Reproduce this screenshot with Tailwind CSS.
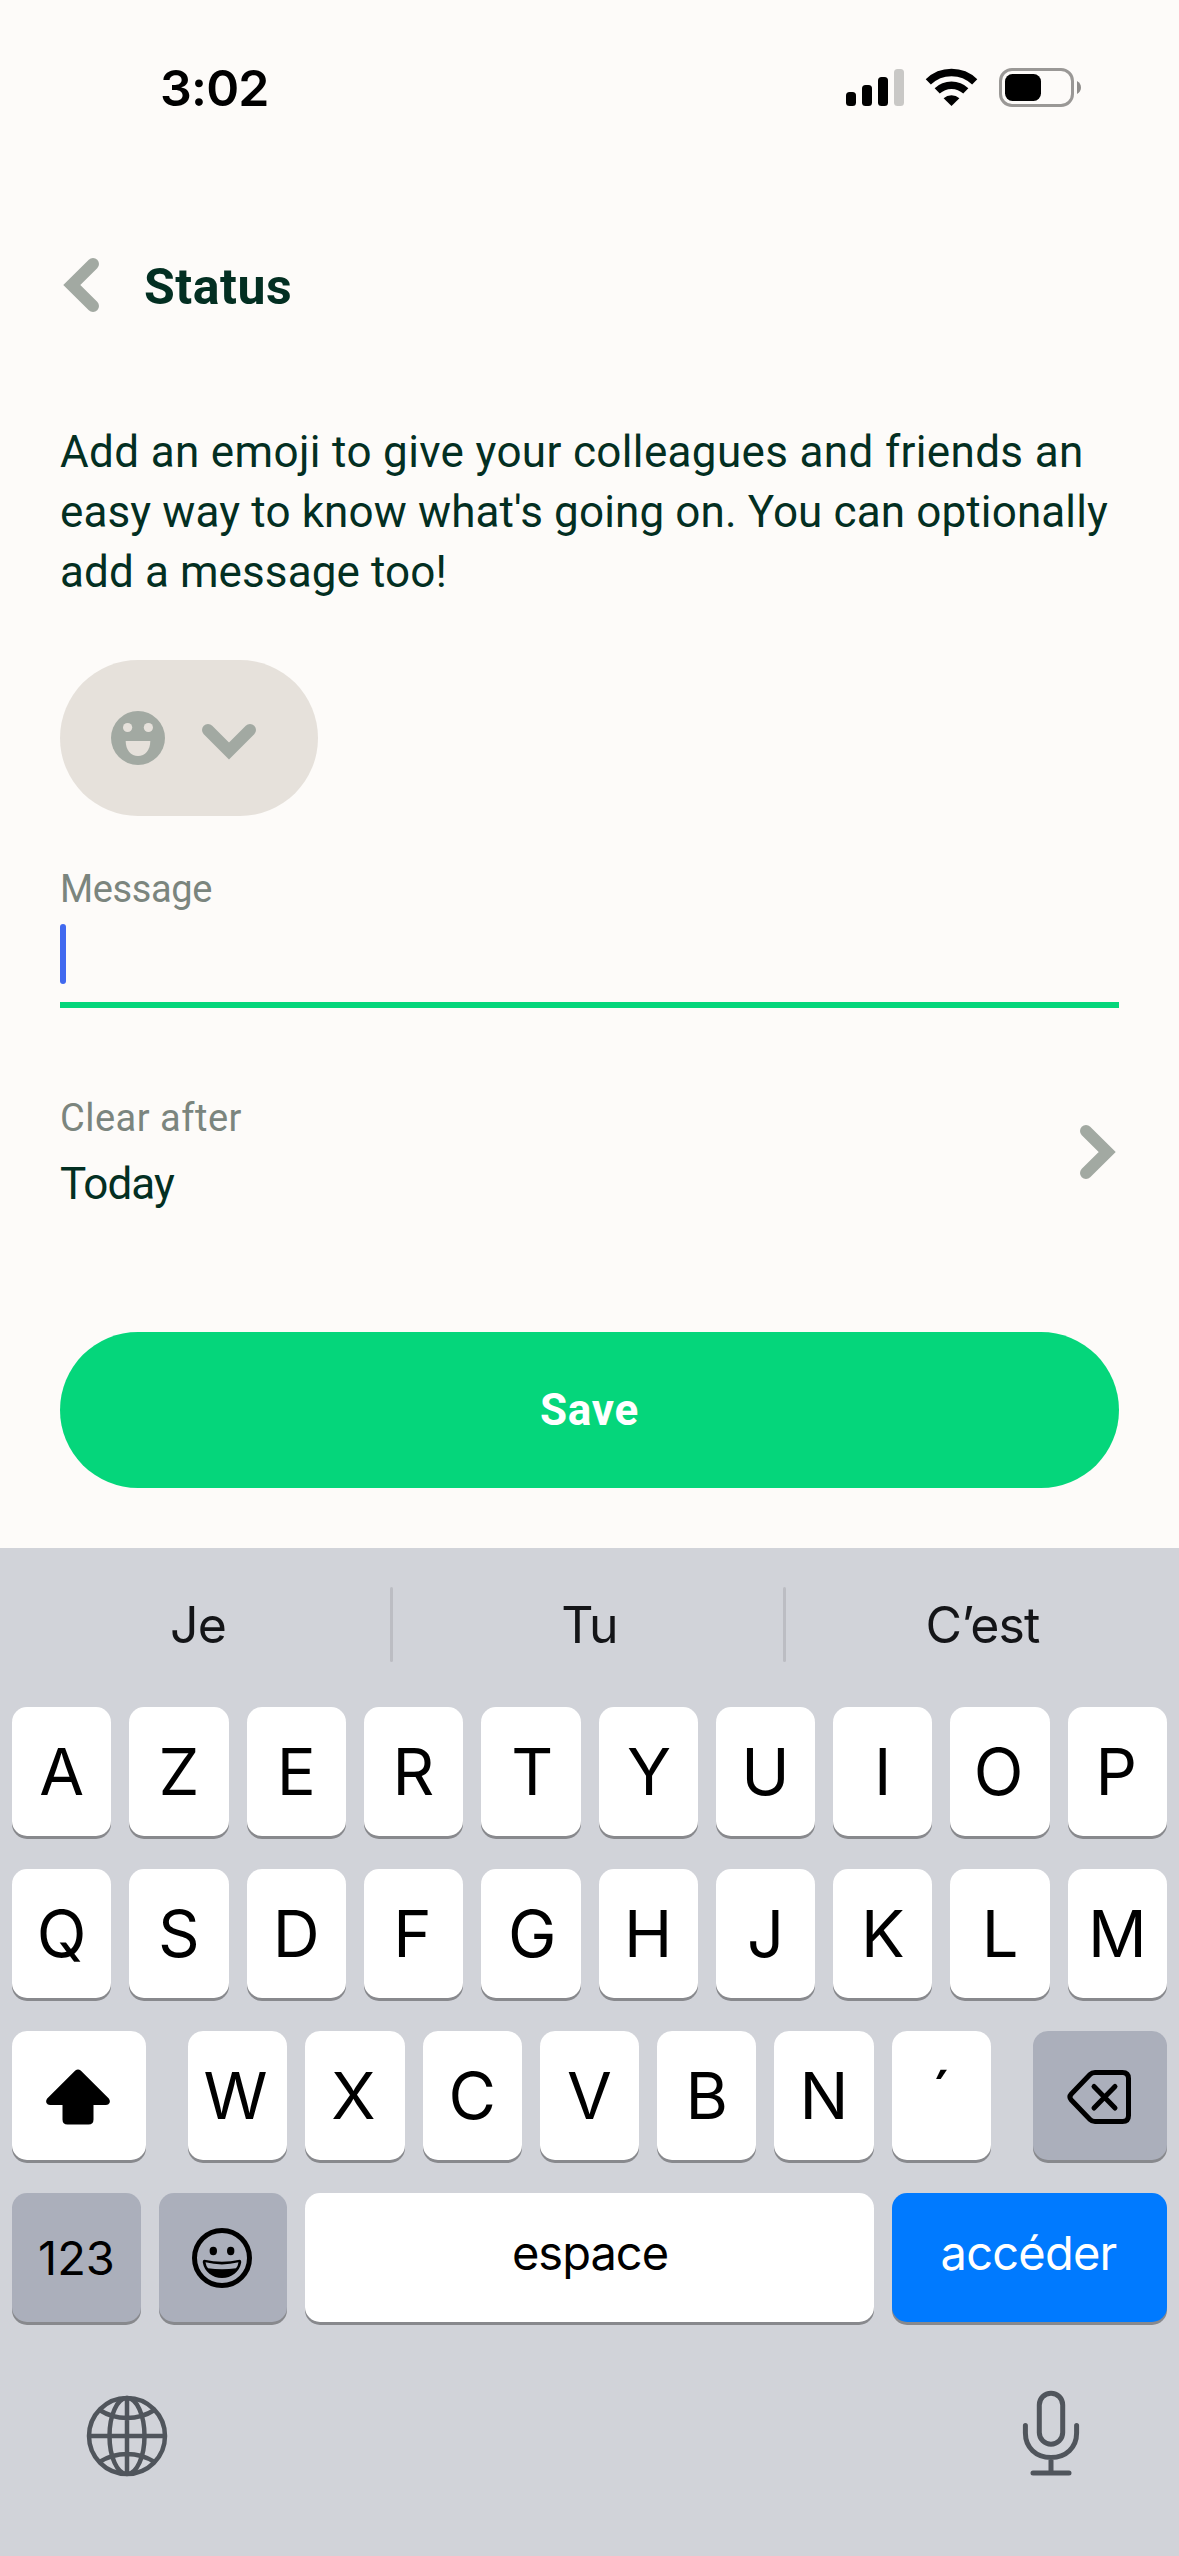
<!DOCTYPE html>
<html lang="fr">
<head>
<meta charset="utf-8">
<title>Status</title>
<script src="https://cdn.jsdelivr.net/npm/@tailwindcss/browser@4"></script>
</head>
<body class="w-[1179px] h-[2556px] overflow-hidden bg-[#fdfbf9] flex flex-col font-['Roboto',sans-serif] text-[#032f22]">

  <!-- Status bar -->
  <header class="h-[176px] shrink-0 flex items-center justify-between pl-[160px] pr-[98px] font-['Inter',sans-serif] text-black">
    <span class="text-[50px] font-semibold tracking-[-0.8px] leading-none">3:02</span>
    <svg class="w-[235px] h-[40px]" viewBox="846 68 235 40" fill="none">
      <rect x="846" y="92" width="10" height="14" rx="3.5" fill="#000"/>
      <rect x="862" y="85" width="10" height="21" rx="3.5" fill="#000"/>
      <rect x="878" y="77" width="10" height="29" rx="3.5" fill="#000"/>
      <rect x="894" y="69" width="10" height="37" rx="3.5" fill="#c9c8c6"/>
      <path d="M928.3 81.8A33.400 33.400 0 0 1 974.7 81.8" stroke="#000" stroke-width="7.4"/>
      <path d="M937.2 90.9A20.800 20.800 0 0 1 965.8 90.9" stroke="#000" stroke-width="7.4"/>
      <path d="M951.5 106L943.6 98.2A12 12 0 0 1 959.4 98.2Z" fill="#000"/>
      <rect x="1000.5" y="69.5" width="72" height="36" rx="11.5" stroke="#9a9896" stroke-width="3"/>
      <rect x="1005" y="74" width="36" height="27" rx="7.5" fill="#000"/>
      <path d="M1077 81C1082.300 83.500 1082.300 91.500 1077 94Z" fill="#8f8d8b"/>
    </svg>
  </header>

  <!-- Title row -->
  <div class="h-[222px] shrink-0 flex items-center pl-[62px]">
    <svg class="w-[38px] h-[54px] mb-1" viewBox="0 0 38 54" fill="none" stroke="#a2a9a2" stroke-width="12" stroke-linecap="round"><path d="M31 6L9.800 27L31 48"/></svg>
    <h1 class="ml-[44px] text-[50px] font-bold leading-[60px] tracking-[0.5px]">Status</h1>
  </div>

  <main class="px-[60px] pt-6 h-[1150px] shrink-0 flex flex-col">
    <p class="text-[44px] leading-[60px] whitespace-nowrap">
      <span class="block tracking-[0.35px]">Add an emoji to give your colleagues and friends an</span>
      <span class="block tracking-[0.13px]">easy way to know what's going on. You can optionally</span>
      <span class="block tracking-[0.1px]">add a message too!</span>
    </p>

    <button class="mt-[58px] w-[258px] h-[156px] shrink-0 rounded-[78px] bg-[#e6e1db] flex items-center pl-[51px] gap-[37px]">
      <svg class="w-[54px] h-[54px]" viewBox="0 0 54 54"><circle cx="27" cy="27" r="27" fill="#a2a9a2"/><circle cx="16.600" cy="16.500" r="4.600" fill="#e6e1db"/><circle cx="37.400" cy="16.500" r="4.600" fill="#e6e1db"/><path d="M14.700 30H39.300C39.300 39 34 45 27 45S14.700 39 14.700 30Z" fill="#e6e1db"/></svg>
      <svg class="w-[54px] h-[38px] mt-[7px]" viewBox="0 0 54 38" fill="none" stroke="#a2a9a2" stroke-width="12" stroke-linecap="round"><path d="M6 7L27 28L48 7"/></svg>
    </button>

    <label class="mt-[53px] text-[38px] leading-[40px] text-[#7b857e] tracking-[-0.4px]">Message</label>
    <div class="mt-[15px] h-[84px] shrink-0 border-b-[6px] border-[#05d67b]">
      <div class="w-[6px] h-[60px] rounded-full bg-[#4169ef]"></div>
    </div>

    <div class="mt-[90px] flex items-center justify-between">
      <div class="flex flex-col">
        <span class="text-[38px] leading-[40px] text-[#7b857e] tracking-[0.5px]">Clear after</span>
        <span class="mt-[22px] text-[44px] leading-[48px] tracking-[-0.9px]">Today</span>
      </div>
      <svg class="w-[38px] h-[54px] mr-px mb-[2px]" viewBox="0 0 38 54" fill="none" stroke="#a2a9a2" stroke-width="12" stroke-linecap="round"><path d="M6 6L27.200 27L6 48"/></svg>
    </div>

    <button class="mt-[124px] h-[156px] shrink-0 rounded-full bg-[#05d67b] text-white text-[44px] font-bold tracking-[0.7px]">Save</button>
  </main>

  <!-- Keyboard -->
  <section class="flex-1 bg-[#d1d3d9] text-black font-['Inter',sans-serif] flex flex-col">
    <div class="h-[159px] shrink-0 flex items-center pb-[6px] text-[50px] leading-none tracking-[-0.9px] text-[#141518]">
      <span class="w-[390px] text-center pl-[6px]">Je</span>
      <i class="w-[3px] h-[75px] rounded-full bg-[#bcbdc3]"></i>
      <span class="w-[390px] text-center pl-[3px]">Tu</span>
      <i class="w-[3px] h-[75px] rounded-full bg-[#bcbdc3]"></i>
      <span class="flex-1 text-center">C’est</span>
    </div>

    <div class="px-[12px] flex flex-col gap-[33px] text-[65px] leading-none">
      <div class="grid grid-cols-10 gap-[18px] *:h-[129px] *:rounded-[15px] *:bg-white *:shadow-[0_3px_0_#88898d] *:flex *:items-center *:justify-center">
        <kbd class="font-[Inter]">A</kbd><kbd class="font-[Inter]">Z</kbd><kbd class="font-[Inter]">E</kbd><kbd class="font-[Inter]">R</kbd><kbd class="font-[Inter] pl-[3px]">T</kbd><kbd class="font-[Inter] pl-[2px]">Y</kbd><kbd class="font-[Inter]">U</kbd><kbd class="font-[Inter]">I</kbd><kbd class="font-[Inter] pr-[3px]">O</kbd><kbd class="font-[Inter] pr-[2px]">P</kbd>
      </div>
      <div class="grid grid-cols-10 gap-[18px] *:h-[129px] *:rounded-[15px] *:bg-white *:shadow-[0_3px_0_#88898d] *:flex *:items-center *:justify-center">
        <kbd class="font-[Inter]">Q</kbd><kbd class="font-[Inter]">S</kbd><kbd class="font-[Inter]">D</kbd><kbd class="font-[Inter] pr-[2px]">F</kbd><kbd class="font-[Inter] pl-[3px]">G</kbd><kbd class="font-[Inter]">H</kbd><kbd class="font-[Inter]">J</kbd><kbd class="font-[Inter]">K</kbd><kbd class="font-[Inter]">L</kbd><kbd class="font-[Inter]">M</kbd>
      </div>
      <div class="flex gap-[42px]">
        <div class="w-[134px] h-[129px] rounded-[15px] bg-white shadow-[0_3px_0_#88898d] flex items-center justify-center">
          <svg class="w-[66px] h-[56px] mt-[2px] mr-[3px]" viewBox="0 0 66 56"><path d="M30.300 1.600Q33 -0.800 35.700 1.600L63.800 29.600Q65.500 31.800 64.500 34Q63.500 36 61 36H48.500V50.500Q48.500 55.500 43.500 55.500H22.500Q17.500 55.500 17.500 50.500V36H5Q2.500 36 1.500 34Q0.500 31.800 2.200 29.600Z" fill="#000"/></svg>
        </div>
        <div class="flex-1 grid grid-cols-7 gap-[18px] *:h-[129px] *:rounded-[15px] *:bg-white *:shadow-[0_3px_0_#88898d] *:flex *:items-center *:justify-center">
          <kbd class="font-[Inter] pr-[4px]">W</kbd><kbd class="font-[Inter] pr-[3px]">X</kbd><kbd class="font-[Inter]">C</kbd><kbd class="font-[Inter]">V</kbd><kbd class="font-[Inter]">B</kbd><kbd class="font-[Inter]">N</kbd><kbd class="font-[Inter]">´</kbd>
        </div>
        <div class="w-[134px] h-[129px] rounded-[15px] bg-[#abafbb] shadow-[0_3px_0_#88898d] flex items-center justify-center">
          <svg class="w-[66px] h-[54px] mt-[3px]" viewBox="0 0 66 54" fill="none" stroke="#000" stroke-width="5" stroke-linecap="round" stroke-linejoin="round"><path d="M28 2.500H55.500Q61.500 2.500 61.500 8.500V45.500Q61.500 51.500 55.500 51.500H28Q25 51.500 23 49.500L4.300 30Q1.600 27 4.300 24L23 4.500Q25 2.500 28 2.500Z"/><path d="M27 16.500L48 38M48 16.500L27 38"/></svg>
        </div>
      </div>
      <div class="flex gap-[18px] text-[47px] *:h-[129px] *:rounded-[15px] *:shadow-[0_3px_0_#88898d] *:flex *:items-center *:justify-center">
        <div class="w-[129px] bg-[#abafbb]">123</div>
        <div class="w-[128px] bg-[#abafbb]">
          <svg class="w-[60px] h-[60px] mr-[3px]" viewBox="0 0 60 60"><circle cx="30" cy="30" r="27.500" fill="none" stroke="#000" stroke-width="5"/><ellipse cx="21.300" cy="23" rx="3.700" ry="4.200"/><ellipse cx="38.700" cy="23" rx="3.700" ry="4.200"/><path d="M12.500 31.700Q30 36 47.500 31.700Q49.400 31.700 49.200 34.500C47.500 44 39.500 50 30 50S12.500 44 10.800 34.500Q10.600 31.700 12.500 31.700Z"/><path d="M13.500 34.300Q30 38.500 46.500 34.300Q46 38 44 40.200Q30 42.500 16 40.200Q14 38 13.500 34.300Z" fill="#abafbb"/></svg>
        </div>
        <div class="flex-1 bg-white tracking-[-1px] pb-[10px] pl-[1px]">espace</div>
        <div class="w-[275px] bg-[#007aff] text-white tracking-[-0.8px] pb-[10px] pr-[2px]">accéder</div>
      </div>
    </div>

    <div class="mt-[65px] flex items-start justify-between pl-[86px] pr-[98px] text-[#50555c]">
      <svg class="w-[82px] h-[82px] mt-[8px]" viewBox="-41 -41 82 82" fill="none" stroke="currentColor" stroke-width="4.500"><circle r="38"/><ellipse rx="17.500" ry="38"/><path d="M0 -38V38M-38 0H38M-27.500 -26Q-15 -18 0 -18T27.500 -26M-27.500 26Q-15 18 0 18T27.500 26"/></svg>
      <svg class="w-[60px] h-[86px] mt-[3px]" viewBox="0 0 60 86" fill="none" stroke="currentColor" stroke-width="5" stroke-linecap="round"><rect x="18.300" y="3.200" width="23.400" height="51" rx="11.700"/><path d="M4.400 35.500V43C4.400 57.500 15 67.500 30 67.500S55.600 57.500 55.600 43V35.500M30 68V83M12 83H48"/></svg>
    </div>
  </section>
</body>
</html>
